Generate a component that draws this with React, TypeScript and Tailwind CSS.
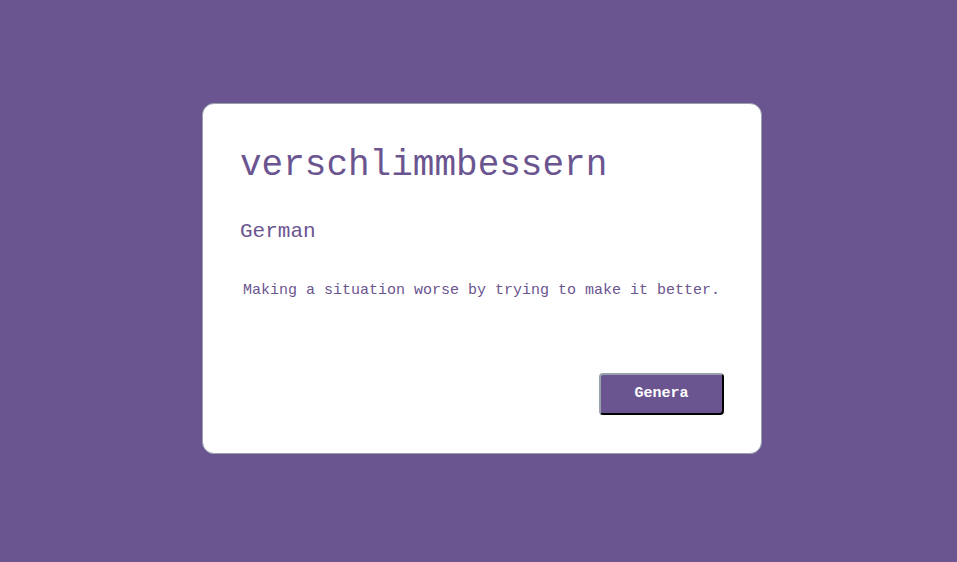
import React from 'react';

const App: React.FC = () => {
  return (
    <div className="min-h-screen w-full bg-[#6b5590] flex items-center justify-center pl-[7px] pb-[5px] font-['Liberation_Mono',monospace]">
      <div className="w-[560px] h-[351px] bg-white rounded-xl border border-gray-400 px-[37px] pt-[38px] pb-[38px] flex flex-col text-[#6b5590]">
        <h1 className="text-[36px] leading-[48px]">verschlimmbessern</h1>
        <h2 className="text-[21px] leading-[28px] mt-[28px]">German</h2>
        <p className="text-[15px] leading-[20px] mt-[35px] pl-[3px]">
          Making a situation worse by trying to make it better.
        </p>
        <div className="mt-auto flex justify-end">
          <button className="w-[125px] h-[42px] bg-[#6b5590] text-white font-bold text-[15px] rounded border-2 border-t-gray-400 border-l-gray-400 border-r-black border-b-black">
            Genera
          </button>
        </div>
      </div>
    </div>
  );
};

export default App;
